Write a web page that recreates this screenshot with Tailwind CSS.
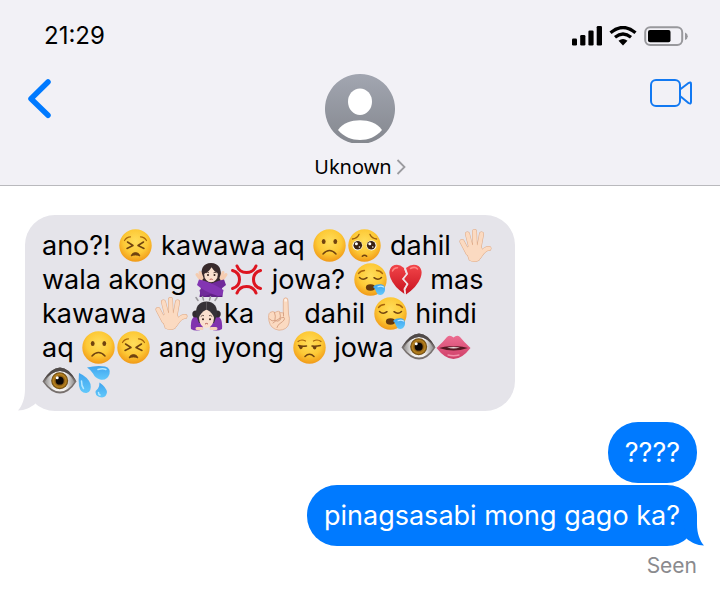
<!DOCTYPE html>
<html lang="tl">
<head>
    <meta charset="UTF-8">
    <meta name="viewport" content="width=device-width, initial-scale=1.0">
    <title>Messages</title>
    <script src="https://cdn.jsdelivr.net/npm/@tailwindcss/browser@4"></script>
</head>
<body class="bg-white text-black font-['Inter',sans-serif] min-h-screen">

    <!-- Emoji artwork -->
    <svg class="absolute w-0 h-0" aria-hidden="true">
        <defs>
            <radialGradient id="face" cx="50%" cy="38%" r="62%">
                <stop offset="0" stop-color="#ffde5c"/>
                <stop offset=".6" stop-color="#fdc936"/>
                <stop offset="1" stop-color="#f19a18"/>
            </radialGradient>
            <linearGradient id="drop" x1="0" y1="0" x2="0" y2="1">
                <stop offset="0" stop-color="#3fa4ee"/>
                <stop offset="1" stop-color="#62c8fb"/>
            </linearGradient>
            <linearGradient id="heart" x1="0" y1="0" x2="0" y2="1">
                <stop offset="0" stop-color="#f2464a"/>
                <stop offset="1" stop-color="#c9121f"/>
            </linearGradient>
            <radialGradient id="iris">
                <stop offset=".3" stop-color="#5a3208"/>
                <stop offset=".75" stop-color="#b98420"/>
                <stop offset="1" stop-color="#5d3d0c"/>
            </radialGradient>
            <linearGradient id="lip" x1="0" y1="0" x2="0" y2="1">
                <stop offset="0" stop-color="#ec6d91"/>
                <stop offset="1" stop-color="#cf3f68"/>
            </linearGradient>
            <linearGradient id="sclera" x1="0" y1="0" x2="1" y2="0">
                <stop offset="0" stop-color="#8f8d8d"/>
                <stop offset=".3" stop-color="#f3f1ef"/>
                <stop offset=".7" stop-color="#f3f1ef"/>
                <stop offset="1" stop-color="#8f8d8d"/>
            </linearGradient>
        </defs>

        <symbol id="persevere" viewBox="0 0 35 35">
            <circle cx="17.5" cy="17.5" r="16.2" fill="url(#face)"/>
            <g fill="none" stroke="#70430f" stroke-width="1.5" stroke-linecap="round" stroke-linejoin="round">
                <path d="M9.5 14 15 17.5 9 20.5M25.5 14 20 17.5 26 20.5"/>
                <path d="M6.5 12.5Q8.5 9 12.5 8.8M28.5 12.5Q26.5 9 22.5 8.8" stroke="#a8660d" stroke-width="1.2"/>
            </g>
            <path d="M13 28Q14 24.5 17.5 24.5T22 28Q20 27 17.5 27T13 28Z" fill="#70430f" stroke="#70430f" stroke-width=".8" stroke-linejoin="round"/>
        </symbol>

        <symbol id="frown" viewBox="0 0 35 35">
            <circle cx="17.5" cy="17.5" r="16.2" fill="url(#face)"/>
            <ellipse cx="11.7" cy="13.5" rx="1.9" ry="2.6" fill="#70430f"/>
            <ellipse cx="23.3" cy="13.5" rx="1.9" ry="2.6" fill="#70430f"/>
            <path d="M11 26Q17.5 19 24 26" fill="none" stroke="#70430f" stroke-width="1.5" stroke-linecap="round"/>
        </symbol>

        <symbol id="pleading" viewBox="0 0 35 35">
            <circle cx="17.5" cy="17.5" r="16.2" fill="url(#face)"/>
            <path d="M5.5 11Q10 10.5 12 6.5M29.5 11Q25 10.5 23 6.5" fill="none" stroke="#9a5d0e" stroke-width="1.4" stroke-linecap="round"/>
            <circle cx="10.5" cy="17.5" r="5" fill="#fff"/>
            <circle cx="24.5" cy="17.5" r="5" fill="#fff"/>
            <circle cx="10.8" cy="17.3" r="4.3" fill="#392112"/>
            <circle cx="24.2" cy="17.3" r="4.3" fill="#392112"/>
            <circle cx="9.4" cy="15.7" r="1.5" fill="#fff"/>
            <circle cx="22.8" cy="15.7" r="1.5" fill="#fff"/>
            <circle cx="12.4" cy="19" r=".8" fill="#fff"/>
            <circle cx="25.8" cy="19" r=".8" fill="#fff"/>
            <path d="M15.3 28.3Q17.5 26 19.7 28.3" fill="none" stroke="#70430f" stroke-width="1.5" stroke-linecap="round"/>
        </symbol>

        <symbol id="sleepy" viewBox="0 0 35 35">
            <circle cx="17.5" cy="17.5" r="16.2" fill="url(#face)"/>
            <g fill="none" stroke="#70430f" stroke-width="1.5" stroke-linecap="round">
                <path d="M6.5 15.5Q10 19 14 15.7M21 15.7Q25 19 28.5 15.5"/>
                <path d="M5.5 11.5Q8 8.5 11.5 8.5M29.5 11.5Q27 8.5 23.5 8.5" stroke="#a8660d" stroke-width="1.3"/>
            </g>
            <ellipse cx="17.5" cy="25.5" rx="4.6" ry="3.2" fill="#65390e"/>
            <path d="M20 25C22 22.5 26 22 29 22.5 33.5 23.5 33 32.5 27.5 33 22.5 33.2 23.5 27 20 25Z" fill="url(#drop)"/>
            <path d="M25 24.8Q28 23.5 30.5 25" fill="none" stroke="#c3ebff" stroke-width="1.2" stroke-linecap="round"/>
        </symbol>

        <symbol id="unamused" viewBox="0 0 35 35">
            <circle cx="17.5" cy="17.5" r="16.2" fill="url(#face)"/>
            <g fill="none" stroke="#70430f" stroke-width="1.5" stroke-linecap="round">
                <path d="M6.5 15.5Q10 16.5 14.5 16M20 16Q24 16.5 28.5 15.5"/>
                <path d="M6 11.5Q9.5 8.8 13.5 11M29 11.5Q25.5 8.8 21.5 11" stroke="#a8660d" stroke-width="1.2"/>
                <path d="M13 26.5Q17.5 22 22 26.5"/>
            </g>
            <path d="M6.8 16H11Q10.5 19.3 8.5 19.2 7 19 6.8 16ZM20.5 16.5H24.8Q24.3 19.5 22.5 19.4 20.7 19 20.5 16.5Z" fill="#70430f"/>
        </symbol>

        <symbol id="hand" viewBox="0 0 35 35">
            <g fill="none" stroke-linecap="round" stroke-linejoin="round">
                <path d="M4 13.5 10 25M9.5 6 13 20M16.5 3.5 17 19M23.5 6 21 20M31 20.5Q27 20 21.5 28" stroke="#dfa985" stroke-width="5"/>
                <path d="M8.5 21Q16 15 22.5 19.5L24.5 24 20.5 31.5Q16 34 12 31.5Z" fill="#dfa985" stroke="#dfa985" stroke-width="2.6"/>
                <path d="M4 13.5 10 25M9.5 6 13 20M16.5 3.5 17 19M23.5 6 21 20M31 20.5Q27 20 21.5 28" stroke="#fbdac1" stroke-width="4"/>
                <path d="M8.5 21Q16 15 22.5 19.5L24.5 24 20.5 31.5Q16 34 12 31.5Z" fill="#fbdac1" stroke="#fbdac1" stroke-width="1.6"/>
            </g>
        </symbol>

        <symbol id="point" viewBox="0 0 35 35">
            <path d="M21.3 17V5Q21.3 1.8 23.7 1.8T26 5L26.5 18Q28 22 27 27 25.5 34 17 34.2 8.5 33 7 25 5.8 18 8 16.5 11 14.5 13 16.5 17 14 18.5 16.5Z" fill="#fbdac1" stroke="#dfad8f" stroke-width=".8"/>
            <path d="M12.5 16.5Q14 20 13 24M17.8 16.5Q19 20 18 23M7.5 23Q10 26 13 24.5 16 26.5 18.5 23.5M11 27Q18 21 22 21.5 24 23.5 18 27.5 15.5 29 15 31.5M21.5 17 21.5 20" fill="none" stroke="#d49c7e" stroke-width=".9" stroke-linecap="round"/>
            <path d="M22.4 5.5V3.8Q22.5 2.7 23.7 2.7T25 3.8V5.5Z" fill="#fff1e7"/>
        </symbol>

        <symbol id="no-good" viewBox="0 0 35 35">
            <path d="M8 17Q5 1.5 17 1Q29 1.5 26.5 17L28 23H6Z" fill="#382a2c"/>
            <ellipse cx="17" cy="12.8" rx="6.8" ry="7.5" fill="#fae0ce"/>
            <path d="M9.5 12Q15.5 10 17.5 5Q20 10 25 11.5 25 3 17 3T9.5 12Z" fill="#382a2c"/>
            <path d="M12 10.8Q13.5 9.7 15 10.8M19.5 10.8Q21 9.7 22.5 10.8" fill="none" stroke="#3c2924" stroke-width=".8"/>
            <circle cx="14" cy="13" r="1" fill="#36221b"/>
            <circle cx="20.5" cy="13" r="1" fill="#36221b"/>
            <path d="M15.7 17.5Q17.2 16.5 18.7 17.5" fill="none" stroke="#b85f58" stroke-width="1"/>
            <path d="M3 12.5 7 18M6 10.5 8 16M32 12.5 28 18M29 10.5 27 16" stroke="#f5ccb0" stroke-width="3" stroke-linecap="round"/>
            <path d="M7.5 22H27.5L28.5 35H5.5Z" fill="#5f1f85"/>
            <path d="M30 17.5Q20 19 5.5 28L6.5 33.5 11 34Q25 29.5 32 23Z" fill="#702a9a"/>
            <path d="M5 17.5Q15 19 29.5 28L28.5 33.5 24 34Q10 29.5 3 23Z" fill="#8335b2"/>
        </symbol>

        <symbol id="bow" viewBox="0 0 35 35">
            <path d="M7 1.5 9 4.5M13.5 .5 14.5 4M21.5 .5 20.5 4M28 1.5 26 4.5" stroke="#98969b" stroke-width="1.5" stroke-linecap="round"/>
            <path d="M6 20Q1 23 2 33Q7 36 14 33L13 23ZM29 20Q34 23 33 33Q28 36 21 33L22 23Z" fill="#8133ae"/>
            <circle cx="6.8" cy="18" r="3.5" fill="#302a2f"/>
            <circle cx="28.2" cy="18" r="3.5" fill="#302a2f"/>
            <path d="M7 19Q6 6 17.5 5.5Q29 6 28 19L25 27H10Z" fill="#353137"/>
            <path d="M10 22Q11 17 17.5 13.5Q24 17 25 22Q24.5 31 17.5 32Q10.5 31 10 22Z" fill="#fae0ce"/>
            <path d="M17.5 6V14" stroke="#625c62" stroke-width=".8"/>
            <path d="M11.8 20.5Q13.5 18.7 15 19.7M23.2 20.5Q21.5 18.7 20 19.7" fill="none" stroke="#453331" stroke-width=".8"/>
            <circle cx="14" cy="23.2" r="1" fill="#36221b"/>
            <circle cx="21" cy="23.2" r="1" fill="#36221b"/>
            <path d="M16 28Q17.5 26.8 19 28" fill="none" stroke="#b85f58" stroke-width="1"/>
            <path d="M8 32.5H13M22 32.5H27" stroke="#f5d1ba" stroke-width="3" stroke-linecap="round"/>
        </symbol>

        <symbol id="anger" viewBox="0 0 35 35">
            <g fill="none" stroke="#dd1520" stroke-width="3" stroke-linecap="round">
                <path d="M8 4Q10.5 10.5 17.5 10.5T27 4"/>
                <path d="M8 31Q10.5 24.5 17.5 24.5T27 31"/>
                <path d="M3.5 8.5Q10.5 10.5 10.5 17.5T3.5 26.5"/>
                <path d="M31.5 8.5Q24.5 10.5 24.5 17.5T31.5 26.5"/>
            </g>
        </symbol>

        <symbol id="broken-heart" viewBox="0 0 35 35">
            <path d="M16 6Q10 .5 4.5 4Q-.5 8 2.5 16 6 25 16.5 32L15.5 27 18.5 22 14 17 18 12Z" fill="url(#heart)"/>
            <path d="M18 6Q24.5 .5 30.5 4Q35.5 8 32.5 16 29 25 18 32.5L17.5 27.5 20.5 22 16 17 20 12Z" fill="url(#heart)"/>
            <path d="M16.5 6.5 19 12 15 17 19.5 22 16.5 27 17.2 31.5" fill="none" stroke="#f3dfe3" stroke-width="1.3"/>
            <path d="M4.5 9Q6 5.5 9.5 5.7M22.5 6.5Q27 4 29.5 7" fill="none" stroke="#ff8380" stroke-width="1.5" stroke-linecap="round"/>
        </symbol>

        <symbol id="eye" viewBox="0 0 35 35">
            <path d="M.5 17.5Q9 3.5 18 3.5T34.5 17.5Q27 29.5 18 29.5T.5 17.5Z" fill="#77706e"/>
            <path d="M2.5 18Q9.5 7 18 7T32.5 18Q26 27.5 18 27.5T2.5 18Z" fill="url(#sclera)"/>
            <circle cx="17.7" cy="16.7" r="8.5" fill="url(#iris)"/>
            <circle cx="17.7" cy="16.7" r="3.9" fill="#0c0806"/>
            <circle cx="15.2" cy="13.8" r="1.5" fill="#fff"/>
            <path d="M.5 17.5Q9 3.5 18 3.5T34.5 17.5Q26 7 18 7T.5 17.5Z" fill="#504a49"/>
        </symbol>

        <symbol id="mouth" viewBox="0 0 35 35">
            <path d="M.5 18Q7 12 11 7Q14 4.5 17.5 7.5Q21 4.5 24 7Q28 12 34.5 18Q26 29 17.5 29T.5 18Z" fill="url(#lip)"/>
            <path d="M3 18Q11 15.5 17.5 16.5Q24 15.5 32 18Q24 20.5 17.5 20.5T3 18Z" fill="#561822"/>
            <path d="M11 17.6Q17.5 16.5 24 17.6Q17.5 19.3 11 17.6Z" fill="#e9dcdc"/>
            <path d="M12 25Q17.5 26.5 23 25" fill="none" stroke="#f191aa" stroke-width="1.3" stroke-linecap="round"/>
        </symbol>

        <symbol id="sweat" viewBox="0 0 35 35">
            <path d="M10 3.5Q20 1 28 2.5Q34 4 32.5 10Q30 17 23 15.5Q18 14 16 9.5 14 6 10 3.5Z" fill="url(#drop)"/>
            <path d="M2 9Q11 13 13.5 20Q15 27.5 9.5 29Q3.5 29.5 2 22Q1.3 16 2 9Z" fill="url(#drop)"/>
            <path d="M22.5 18.5Q29 23 30 28Q29.5 33 25 33.5Q19 33 18.5 28.5Q18.5 26.5 21 24.5Q22.5 22.5 22.5 18.5Z" fill="url(#drop)"/>
            <path d="M21 5.5Q26 4 29 5.5M4.5 17Q4.5 22 6.5 24.5M21.5 28.5Q21.5 30.5 23 31" fill="none" stroke="#b8e8ff" stroke-width="1.5" stroke-linecap="round"/>
        </symbol>

        <!-- Bubble tail -->
        <symbol id="tail" viewBox="0 0 24 36">
            <path d="M7 6V14C7 24 4 31 0 35.5C7 35.5 13 32 17 29L21 10V6Z" fill="currentColor"/>
        </symbol>
    </svg>

    <header class="bg-[#f2f1f6] border-b border-[#b9b9bd]">
        <!-- Status bar -->
        <div class="h-18 pl-11 pr-8 flex items-center justify-between">
            <time class="text-2xl leading-7">21:29</time>
            <div class="flex items-center gap-[7px]">
                <svg class="w-[30px] h-5" viewBox="0 0 30 20" role="img" aria-label="Signal">
                    <rect x="0" y="12.5" width="5" height="7" rx="1.3"/>
                    <rect x="8.2" y="9" width="5.2" height="10.5" rx="1.3"/>
                    <rect x="16.4" y="4.5" width="5.2" height="15" rx="1.3"/>
                    <rect x="24.7" y="0" width="5.3" height="19.5" rx="1.3"/>
                </svg>
                <svg class="w-7 h-5" viewBox="0 0 28 20" role="img" aria-label="Wi-Fi">
                    <path d="M1.5 6.7Q14 -3.7 26.5 6.7M6 11.2Q14 4.8 22 11.2" fill="none" stroke="#000" stroke-width="3.3"/>
                    <path d="M9.5 14.8Q14 11.3 18.5 14.8L14 19.5Z"/>
                </svg>
                <svg class="w-11 h-5" viewBox="0 0 44 20" role="img" aria-label="Battery">
                    <rect x="1.2" y="1.2" width="37" height="17.8" rx="5" fill="none" stroke="#98989c" stroke-width="2"/>
                    <rect x="4" y="4" width="22.5" height="12.3" rx="2"/>
                    <path d="M41 6.5Q43.8 7.5 43.8 10.2T41 14Z" fill="#98989c"/>
                </svg>
            </div>
        </div>

        <!-- Navigation -->
        <nav class="grid grid-cols-[1fr_auto_1fr] items-start pt-[2px] pb-[6px] px-7">
            <button type="button" aria-label="Back" class="justify-self-start mt-[5px]">
                <svg class="w-6 h-10" viewBox="0 0 24 40">
                    <path d="M20 3 3 19.7 20 36.3" fill="none" stroke="#007aff" stroke-width="5.5" stroke-linecap="round" stroke-linejoin="round"/>
                </svg>
            </button>
            <button type="button" class="flex flex-col items-center gap-[11px]">
                <svg class="w-[70px] h-[70px]" viewBox="0 0 70 70" aria-hidden="true">
                    <defs>
                        <linearGradient id="avatar" x1="0" y1="0" x2="0" y2="1">
                            <stop offset="0" stop-color="#a2a6b1"/>
                            <stop offset="1" stop-color="#85888f"/>
                        </linearGradient>
                    </defs>
                    <path d="M26.7 69A35 35 0 1 1 43.3 69Z" fill="url(#avatar)"/>
                    <ellipse cx="35" cy="27.7" rx="12" ry="13.3" fill="#fff"/>
                    <path d="M13 56C18 49 26 46.3 35 46.3S52 49 57 56C51 63 43 66 35 66S19 63 13 56Z" fill="#fff"/>
                </svg>
                <span class="flex items-center gap-1 text-xl leading-6 font-['Noto_Sans',sans-serif]">
                    Uknown
                    <svg class="w-[10px] h-4" viewBox="0 0 10 16" aria-hidden="true">
                        <path d="M1.5 1 8.5 8 1.5 15" fill="none" stroke="#9b9b9f" stroke-width="1.8"/>
                    </svg>
                </span>
            </button>
            <button type="button" aria-label="Video call" class="justify-self-end mt-1">
                <svg class="w-[43px] h-[30px]" viewBox="0 0 43 30" fill="none" stroke="#1279f2" stroke-width="2" stroke-linejoin="round">
                    <rect x="2" y="2" width="29" height="26" rx="5"/>
                    <path d="M31 11.5 39.5 5Q42 3.5 42 6V24Q42 26.5 39.5 25L31 18"/>
                </svg>
            </button>
        </nav>
    </header>

    <!-- Conversation -->
    <main class="flex flex-col pt-[29px] pb-6 pl-[25px] pr-[23px] text-[27px] leading-[34px]">
        <div class="relative self-start max-w-[490px] mb-[11px] rounded-[30px] bg-[#e5e4ea] px-[17px] pt-[14px] pb-3">
            <svg class="absolute -left-[7px] bottom-0 w-6 h-9 text-[#e5e4ea]" aria-hidden="true"><use href="#tail"/></svg>
            <p>
                <span>ano?!</span>
                <svg class="inline w-[35px] h-[35px] -my-1 align-[-4px]" role="img" aria-label="😣"><use href="#persevere"/></svg>
                <span>kawawa aq</span>
                <svg class="inline w-[35px] h-[35px] -my-1 align-[-4px]" role="img" aria-label="☹️"><use href="#frown"/></svg><svg class="inline w-[35px] h-[35px] -my-1 align-[-4px]" role="img" aria-label="🥺"><use href="#pleading"/></svg>
                <span>dahil</span>
                <svg class="inline w-[35px] h-[35px] -my-1 align-[-4px]" role="img" aria-label="🖐🏻"><use href="#hand"/></svg>
                <span>wala akong</span>
                <svg class="inline w-[35px] h-[35px] -my-1 align-[-4px]" role="img" aria-label="🙅🏻‍♀️"><use href="#no-good"/></svg><svg class="inline w-[35px] h-[35px] -my-1 align-[-4px]" role="img" aria-label="💢"><use href="#anger"/></svg>
                <span>jowa?</span>
                <svg class="inline w-[35px] h-[35px] -my-1 align-[-4px]" role="img" aria-label="😪"><use href="#sleepy"/></svg><svg class="inline w-[35px] h-[35px] -my-1 align-[-4px]" role="img" aria-label="💔"><use href="#broken-heart"/></svg>
                <span>mas</span>
                <span>kawawa</span>
                <svg class="inline w-[35px] h-[35px] -my-1 align-[-4px]" role="img" aria-label="🖐🏻"><use href="#hand"/></svg><svg class="inline w-[35px] h-[35px] -my-1 align-[-4px]" role="img" aria-label="🙇🏻‍♀️"><use href="#bow"/></svg><span>ka</span>
                <svg class="inline w-[35px] h-[35px] -my-1 align-[-4px]" role="img" aria-label="☝🏻"><use href="#point"/></svg>
                <span>dahil</span>
                <svg class="inline w-[35px] h-[35px] -my-1 align-[-4px]" role="img" aria-label="😪"><use href="#sleepy"/></svg>
                <span>hindi</span>
                <span>aq</span>
                <svg class="inline w-[35px] h-[35px] -my-1 align-[-4px]" role="img" aria-label="☹️"><use href="#frown"/></svg><svg class="inline w-[35px] h-[35px] -my-1 align-[-4px]" role="img" aria-label="😣"><use href="#persevere"/></svg>
                <span>ang iyong</span>
                <svg class="inline w-[35px] h-[35px] -my-1 align-[-4px]" role="img" aria-label="😒"><use href="#unamused"/></svg>
                <span>jowa</span>
                <svg class="inline w-[35px] h-[35px] -my-1 align-[-4px]" role="img" aria-label="👁️"><use href="#eye"/></svg><svg class="inline w-[35px] h-[35px] -my-1 align-[-4px]" role="img" aria-label="👄"><use href="#mouth"/></svg><svg class="inline w-[35px] h-[35px] -my-1 align-[-4px]" role="img" aria-label="👁️"><use href="#eye"/></svg><svg class="inline w-[35px] h-[35px] -my-1 align-[-4px]" role="img" aria-label="💦"><use href="#sweat"/></svg>
            </p>
        </div>

        <p class="self-end mb-[2px] rounded-[30px] bg-[#007aff] text-white px-[17px] pt-[14px] pb-[13px]">????</p>

        <div class="relative self-end rounded-[30px] bg-[#007aff] text-white px-[17px] pt-[14px] pb-[13px]">
            <svg class="absolute -right-[7px] bottom-0 w-6 h-9 text-[#007aff] -scale-x-100" aria-hidden="true"><use href="#tail"/></svg>
            <p class="relative">pinagsasabi mong gago ka?</p>
        </div>

        <p class="self-end mt-2 text-[21px] leading-6 text-[#8a8a8e]">Seen</p>
    </main>

</body>
</html>
